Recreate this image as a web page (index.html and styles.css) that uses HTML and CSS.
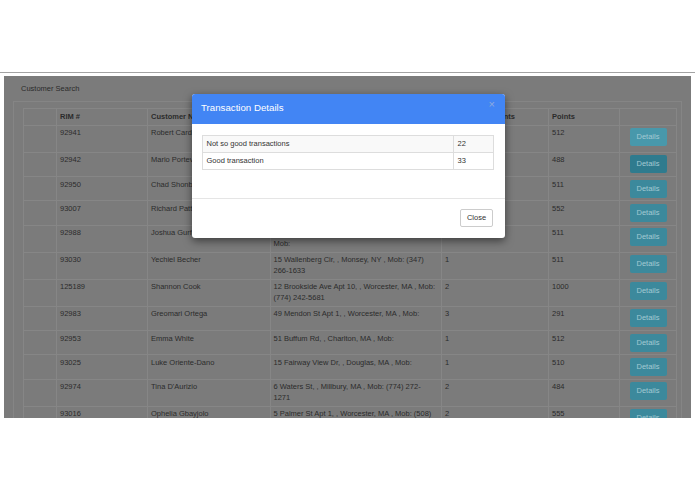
FILE: index.html
```html
<!DOCTYPE html>
<html lang="en">
<head>
<meta charset="utf-8">
<title>Customer Search</title>
<link rel="stylesheet" href="styles.css">
</head>
<body>
<div class="top-space"></div>
<div class="rule"></div>
<div class="frame">
  <div class="page-title">Customer Search</div>
  <div class="panel">
    <table class="grid">
      <colgroup>
        <col class="c-idx"><col class="c-rim"><col class="c-name"><col class="c-addr"><col class="c-cnt"><col class="c-pts"><col class="c-act">
      </colgroup>
      <thead>
        <tr><th></th><th>RIM #</th><th>Customer Name</th><th>Address</th><th>Transaction Counts</th><th>Points</th><th></th></tr>
      </thead>
      <tbody>
        <tr><td></td><td>92941</td><td>Robert Cardillo</td><td class="addr">10 Chestnut St Apt 2, , Worcester, MA , Mob: (508) 555-0134</td><td>1</td><td>512</td><td class="act"><button class="btn-details hover">Details</button></td></tr>
        <tr><td></td><td>92942</td><td>Mario Portevilla</td><td class="addr">3 Elm St, , Auburn, MA , Mob:</td><td>1</td><td>488</td><td class="act"><button class="btn-details active">Details</button></td></tr>
        <tr><td></td><td>92950</td><td>Chad Shonberg</td><td class="addr">22 Main St, , Oxford, MA , Mob:</td><td>2</td><td>511</td><td class="act"><button class="btn-details">Details</button></td></tr>
        <tr><td></td><td>93007</td><td>Richard Patterson</td><td class="addr">8 Oak Rd, , Leicester, MA , Mob:</td><td>1</td><td>552</td><td class="act"><button class="btn-details">Details</button></td></tr>
        <tr><td></td><td>92988</td><td>Joshua Gurfein</td><td class="addr">147 Lakeside Ave Apt 12, , Shrewsbury, MA , Mob:</td><td>1</td><td>511</td><td class="act"><button class="btn-details">Details</button></td></tr>
        <tr><td></td><td>93030</td><td>Yechiel Becher</td><td class="addr">15 Wallenberg Cir, , Monsey, NY , Mob: (347) 266-1633</td><td>1</td><td>511</td><td class="act"><button class="btn-details">Details</button></td></tr>
        <tr><td></td><td>125189</td><td>Shannon Cook</td><td class="addr">12 Brookside Ave Apt 10, , Worcester, MA , Mob: (774) 242-5681</td><td>2</td><td>1000</td><td class="act"><button class="btn-details">Details</button></td></tr>
        <tr><td></td><td>92983</td><td>Greomari Ortega</td><td class="addr">49 Mendon St Apt 1, , Worcester, MA , Mob:</td><td>3</td><td>291</td><td class="act"><button class="btn-details">Details</button></td></tr>
        <tr><td></td><td>92953</td><td>Emma White</td><td class="addr">51 Buffum Rd, , Charlton, MA , Mob:</td><td>1</td><td>512</td><td class="act"><button class="btn-details">Details</button></td></tr>
        <tr><td></td><td>93025</td><td>Luke Oriente-Dano</td><td class="addr">15 Fairway View Dr, , Douglas, MA , Mob:</td><td>1</td><td>510</td><td class="act"><button class="btn-details">Details</button></td></tr>
        <tr><td></td><td>92974</td><td>Tina D'Aurizio</td><td class="addr">6 Waters St, , Millbury, MA , Mob: (774) 272-<br>1271</td><td>2</td><td>484</td><td class="act"><button class="btn-details">Details</button></td></tr>
        <tr><td></td><td>93016</td><td>Ophelia Gbayjolo</td><td class="addr">5 Palmer St Apt 1, , Worcester, MA , Mob: (508)</td><td>2</td><td>555</td><td class="act"><button class="btn-details">Details</button></td></tr>
      </tbody>
    </table>
  </div>

  <div class="modal">
    <div class="modal-header">
      <h4 class="modal-title">Transaction Details</h4>
      <span class="close">&times;</span>
    </div>
    <div class="modal-body">
      <table class="info">
        <colgroup><col class="i-label"><col class="i-val"></colgroup>
        <tr><td>Not so good transactions</td><td>22</td></tr>
        <tr><td>Good transaction</td><td>33</td></tr>
      </table>
    </div>
    <div class="modal-footer">
      <button class="btn-close">Close</button>
    </div>
  </div>
</div>
</body>
</html>
```
FILE: styles.css
```css
* { box-sizing: border-box; }

body {
  margin: 0;
  background: #ffffff;
  font-family: "Liberation Sans", Arial, sans-serif;
}

.top-space { height: 72px; }

.rule {
  height: 1px;
  background: #a3a3a3;
}

.frame {
  position: relative;
  margin: 3px 0 0 4px;
  width: 687px;
  height: 342px;
  background: #7b7b7b;
  overflow: hidden;
  color: #2b2b2b;
  font-size: 7.5px;
  line-height: 10.3px;
}

.page-title {
  height: 17px;
  padding: 7px 17px 0;
  line-height: 11px;
}

.panel {
  margin: 8px 9px 0;
  height: 400px;
  border: 1px solid #858585;
  padding: 6px 5px 0 9px;
}

.grid {
  width: 653px;
  border-collapse: collapse;
  table-layout: fixed;
}

.c-idx { width: 33px; }
.c-rim { width: 91px; }
.c-name { width: 123px; }
.c-addr { width: 171px; }
.c-cnt { width: 107px; }
.c-pts { width: 71px; }
.c-act { width: 57px; }

.grid th,
.grid td {
  border: 1px solid #868686;
  padding: 2.7px 3px;
  vertical-align: top;
  text-align: left;
}

.grid th { font-weight: bold; }

.grid td.addr { padding-right: 1px; padding-left: 2.5px; }

.grid td.act { text-align: center; }

.btn-details {
  display: inline-block;
  vertical-align: top;
  width: 37px;
  height: 18px;
  padding: 0;
  border: none;
  border-radius: 2px;
  background: #3c899c;
  color: #a3c9d3;
  font-family: "Liberation Sans", Arial, sans-serif;
  font-size: 7.5px;
  line-height: 18px;
}

.btn-details.hover { background: #4898ab; }
.btn-details.active { background: #2f7b8e; }

.modal {
  position: absolute;
  left: 188px;
  top: 18px;
  width: 313px;
  background: #ffffff;
  border-radius: 3px;
  box-shadow: 0 3px 9px rgba(0, 0, 0, 0.5);
  overflow: hidden;
  color: #333333;
}

.modal-header {
  position: relative;
  height: 30px;
  display: flex;
  align-items: center;
  padding: 0 9px;
  background: #4285f4;
}

.modal-title {
  margin: 0 0 2px;
  font-size: 9.7px;
  line-height: 12px;
  font-weight: normal;
  color: #ffffff;
}

.close {
  position: absolute;
  right: 10px;
  top: 5px;
  font-size: 11px;
  line-height: 11px;
  color: #8eaade;
}

.modal-body {
  height: 74px;
  padding: 11px 12px 0 10px;
}

.info {
  width: 291px;
  border-collapse: collapse;
  table-layout: fixed;
}

.i-label { width: 251px; }
.i-val { width: 40px; }

.info td {
  border: 1px solid #dddddd;
  padding: 3px 3.5px;
  font-size: 7.5px;
  line-height: 10px;
}

.info tr:first-child td { background: #f9f9f9; }

.modal-footer {
  border-top: 1px solid #e5e5e5;
  padding: 10px 12px 11px;
  text-align: right;
}

.btn-close {
  display: inline-block;
  vertical-align: top;
  width: 33px;
  height: 18px;
  padding: 0;
  border: 1px solid #cccccc;
  border-radius: 2px;
  background: #ffffff;
  color: #333333;
  font-family: "Liberation Sans", Arial, sans-serif;
  font-size: 7.5px;
  line-height: 16px;
  text-align: center;
}
```
